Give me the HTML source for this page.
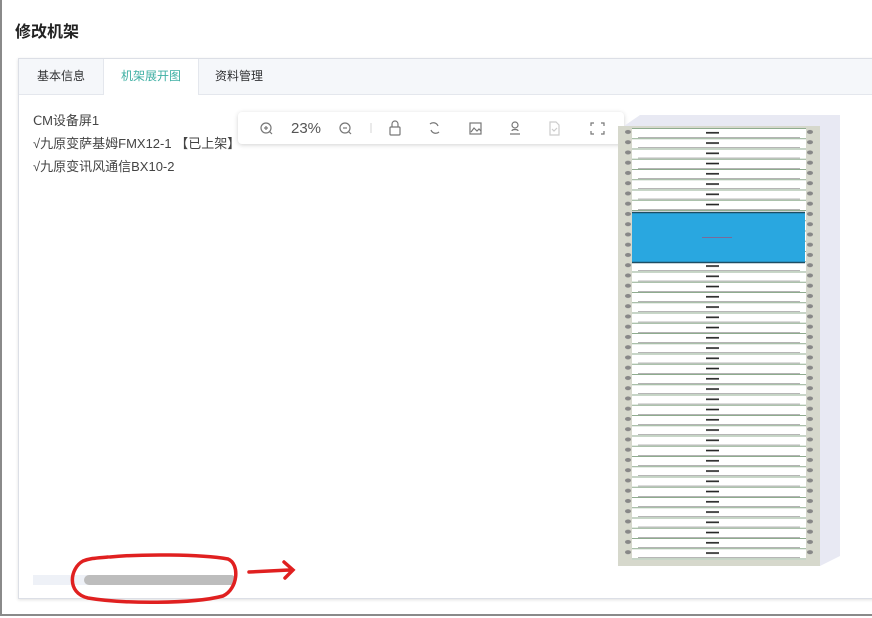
<!DOCTYPE html>
<html><head><meta charset="utf-8"><style>
html,body{margin:0;padding:0;width:872px;height:618px;overflow:hidden;background:#fff;font-family:"Liberation Sans","Noto Sans CJK SC",sans-serif;}
.frame{position:absolute;left:0;top:0;width:872px;height:616px;border-left:2px solid #8a8a8a;border-bottom:2px solid #8a8a8a;box-sizing:border-box;}
.title{position:absolute;left:15px;top:18px;font-size:16px;font-weight:bold;color:#222;}
.card{position:absolute;left:18px;top:58px;width:860px;height:541px;border:1px solid #dcdfe6;box-sizing:border-box;box-shadow:0 1px 3px rgba(0,0,0,.12);}
.tabs{position:absolute;left:0;top:0;right:0;height:35px;background:#f5f7fa;border-bottom:1px solid #e4e7ed;}
.tab{position:absolute;top:0;height:35px;line-height:35px;font-size:12px;color:#303133;text-align:center;}
.tab.act{background:#fff;color:#3fb0a4;border-left:1px solid #e4e7ed;border-right:1px solid #e4e7ed;height:36px;}
.t{position:absolute;left:14px;font-size:13px;color:#444;white-space:nowrap;}
.tb{position:absolute;left:238px;top:112px;width:386px;height:32px;background:#fff;border-radius:4px;box-shadow:0 1px 5px rgba(0,0,0,.18);}
</style></head><body>
<div class="frame"></div>
<div class="title">修改机架</div>
<div class="card">
 <div class="tabs">
  <div class="tab" style="left:0;width:84px">基本信息</div>
  <div class="tab act" style="left:84px;width:94px">机架展开图</div>
  <div class="tab" style="left:178px;width:84px">资料管理</div>
 </div>
 <div class="t" style="top:51px">ⅭM设备屏1</div>
 <div class="t" style="top:74px">√九原变萨基姆FMX12-1 【已上架】</div>
 <div class="t" style="top:97px">√九原变讯风通信BX10-2</div>
 <div style="position:absolute;left:14px;top:516px;width:200px;height:10px;background:#eef1f7"></div>
 <div style="position:absolute;left:65px;top:516px;width:152px;height:10px;background:#bdbdbd;border-radius:5px"></div>
</div>
<div class="tb">
 <svg width="386" height="32" viewBox="0 0 386 32" fill="none" stroke="#777" stroke-width="1.2">
  <circle cx="28" cy="16" r="5"/><line x1="31.5" y1="19.5" x2="34" y2="22"/><line x1="26" y1="16" x2="30" y2="16"/><line x1="28" y1="14" x2="28" y2="18"/>
  <text x="53" y="21" font-size="15" fill="#555" stroke="none" font-family="Liberation Sans">23%</text>
  <circle cx="107" cy="16" r="5"/><line x1="110.5" y1="19.5" x2="113" y2="22"/><line x1="105" y1="16" x2="109" y2="16"/>
  <line x1="133" y1="11" x2="133" y2="21" stroke="#ddd"/>
  <rect x="152" y="15" width="10" height="8" rx="1"/><path d="M154 15v-3a3 3 0 0 1 6 0v3"/>
  <path d="M192 12a5 5 0 0 1 8 2M201 20a5 5 0 0 1-8-2"/>
  <rect x="232" y="11" width="11" height="11"/><path d="M233 20l3-4 3 3 2-2 2 2"/>
  <circle cx="277" cy="13" r="3"/><path d="M272 22h10M274 19c0-2 6-2 6 0"/>
  <path d="M312 10h6l3 3v10h-9z" stroke="#ccc"/><path d="M314 17l2 2 3-3" stroke="#ccc"/>
  <path d="M353 14v-3h3M363 11h3v3M366 19v3h-3M356 22h-3v-3"/>
 </svg>
</div>
<svg style="position:absolute;left:610px;top:110px" width="240" height="470" viewBox="610 110 240 470">
 <defs>
  <pattern id="row" x="610" y="128" width="240" height="10.25" patternUnits="userSpaceOnUse">
   <rect x="22" y="0" width="174" height="10.25" fill="#fff"/>
   <line x1="22" y1="0.5" x2="196" y2="0.5" stroke="#8daa8d" stroke-width="1"/>
   <line x1="28" y1="9.5" x2="190" y2="9.5" stroke="#666" stroke-width="0.5"/>
   <rect x="96" y="4" width="13" height="1.6" fill="#222"/>
   <ellipse cx="18" cy="4" rx="3" ry="2" fill="#888"/>
   <ellipse cx="200" cy="4" rx="3" ry="2" fill="#888"/>
  </pattern>
 </defs>
 <polygon points="624,126 640,115 840,115 840,556 820,566 820,126" fill="#e8e9f3"/>
 <rect x="618" y="126" width="202" height="440" fill="#d6d8cc"/>
 <rect x="618" y="128" width="202" height="432" fill="url(#row)"/>
 <rect x="632" y="212" width="173" height="51" fill="#29a7e0"/>
 <line x1="632" y1="212.5" x2="805" y2="212.5" stroke="#1d4e64" stroke-width="1.5"/>
 <line x1="632" y1="262.5" x2="805" y2="262.5" stroke="#1d4e64" stroke-width="1.5"/>
 <rect x="702" y="237" width="30" height="1" fill="#7a6a9a"/>
</svg>
<svg style="position:absolute;left:0;top:0" width="872" height="618" fill="none" stroke="#e02020" stroke-width="3.5" stroke-linecap="round">
 <path d="M110 557c30-3 90-3 118 2 12 5 10 30-5 37-30 8-100 8-135 2-22-5-18-30-5-37 8-3 14-3 25-4"/>
 <path d="M249 572l40-2M284 562l9 8-8 8"/>
</svg>
</body></html>
